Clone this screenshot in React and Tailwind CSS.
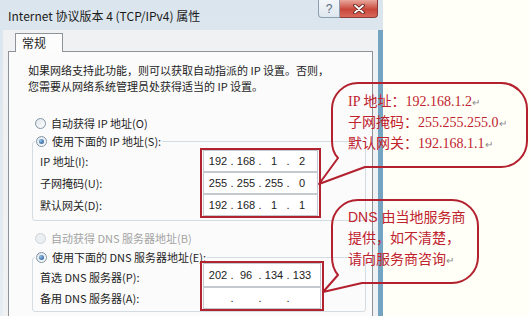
const CJK = "[font-family:'Noto_Sans_CJK_SC','Noto_Sans',sans-serif]";

function Radio({ checked, disabled, label, h = "h-[18px]" }) {
  return (
    <div className={`flex items-center gap-[5px] ${h}`}>
      <span
        className={
          disabled
            ? "w-[11px] h-[11px] rounded-full border border-[#cdd3d8] bg-[#eceff1] flex items-center justify-center shrink-0"
            : "w-[11px] h-[11px] rounded-full border border-[#7f94a7] bg-[linear-gradient(135deg,#dfe5ea,#ffffff)] flex items-center justify-center shrink-0"
        }
      >
        {checked && (
          <span className="w-[5px] h-[5px] rounded-full bg-[radial-gradient(circle_at_35%_35%,#8cc0ea,#1c4a80)]" />
        )}
      </span>
      <span className={disabled ? "text-[#a3a3a3]" : "text-[#1e1e1e]"}>{label}</span>
    </div>
  );
}

function IpField({ parts, h }) {
  return (
    <div
      className={`${h} border border-[#c3c9cf] bg-white flex items-center pl-[2px] text-[11px] text-[#222] [font-family:'Liberation_Sans',sans-serif]`}
    >
      {parts.map((p, i) => (
        <span key={i} className="flex">
          <span className="w-[24px] text-center">{p}</span>
          {i < 3 && <span className="w-[4px] text-center">.</span>}
        </span>
      ))}
    </div>
  );
}

export default function App() {
  return (
    <div className={`w-[529px] h-[316px] relative overflow-hidden bg-[#fffff7] flex ${CJK}`}>
      <div className="w-[383px] h-full flex flex-col bg-[linear-gradient(180deg,#dbe5ed,#e6edf3)]">
        {/* title bar */}
        <div className="h-[30px] flex items-start shrink-0">
          <span className="mt-[7px] ml-[8px] text-[12px] leading-[17px] text-[#1a1a1a] whitespace-nowrap">
            Internet 协议版本 4 (TCP/IPv4) 属性
          </span>
          <div className="ml-auto mr-[5px] flex">
            <div className="w-[22px] h-[18px] border border-t-0 border-[#8c9fb2] rounded-bl-[4px] bg-[linear-gradient(180deg,#f3f6f9,#dfe7ee)] flex items-center justify-center text-[12px] text-[#556a80] [font-family:'Liberation_Sans',sans-serif]">
              ?
            </div>
            <div className="w-[38px] h-[18px] border border-t-0 border-l-0 border-[#8b3b35] rounded-br-[4px] bg-[linear-gradient(180deg,#e9a79d,#c9473b_55%,#d8685a)] flex items-center justify-center">
              <svg width="12" height="10" viewBox="0 0 12 10">
                <path d="M2 1.5 L10 8.5 M10 1.5 L2 8.5" stroke="#5c1d18" strokeWidth="3.6" strokeLinecap="round" />
                <path d="M2 1.5 L10 8.5 M10 1.5 L2 8.5" stroke="#ffffff" strokeWidth="1.8" strokeLinecap="round" />
              </svg>
            </div>
          </div>
        </div>

        {/* body */}
        <div className="flex-1 min-h-0 flex flex-col ml-[3px] border-r-[5px] border-[#75a4c2] bg-[#eff1f3] pt-[3px] px-[5px]">
          <div className="relative z-10 -mb-[1px] ml-[7px] w-[48px] h-[19px] border border-b-0 border-[#8e9299] bg-[#fcfcfc] text-[12px] leading-[18px] text-[#1e1e1e] pl-[6px]">
            常规
          </div>
          <div className="flex-1 border border-[#8e9299] border-b-0 bg-[#fbfbfb] flex flex-col text-[11px] text-[#1e1e1e]">
            <p className="mt-[10px] ml-[19px] leading-[16px] whitespace-nowrap">
              如果网络支持此功能，则可以获取自动指派的 IP 设置。否则，
              <br />
              您需要从网络系统管理员处获得适当的 IP 设置。
            </p>

            <div className="mt-[20px] ml-[26px]">
              <Radio label="自动获得 IP 地址(O)" />
            </div>

            <fieldset className="mt-[2px] ml-[23px] mr-[6px] border border-[#d3dce2] rounded-[3px]">
              <legend className="ml-[2px] px-[1px] h-[14px]">
                <Radio checked label="使用下面的 IP 地址(S):" h="h-[14px]" />
              </legend>
              <div className="flex pb-[2px]">
                <div className="w-[167px] pl-[7px] pt-[2px] flex flex-col">
                  <div className="h-[22px] flex items-center">IP 地址(I):</div>
                  <div className="h-[22px] flex items-center">子网掩码(U):</div>
                  <div className="h-[22px] flex items-center">默认网关(D):</div>
                </div>
                <div className="w-[121px] border-2 border-[#b0232f] px-[1px] flex flex-col">
                  <IpField h="h-[22px]" parts={["192", "168", "1", "2"]} />
                  <IpField h="h-[22px]" parts={["255", "255", "255", "0"]} />
                  <IpField h="h-[22px]" parts={["192", "168", "1", "1"]} />
                </div>
              </div>
            </fieldset>

            <div className="mt-[8px] ml-[26px]">
              <Radio disabled label="自动获得 DNS 服务器地址(B)" />
            </div>

            <fieldset className="mt-[3px] ml-[23px] mr-[6px] border border-[#d3dce2] rounded-[3px]">
              <legend className="ml-[2px] px-[1px] h-[14px]">
                <Radio checked label="使用下面的 DNS 服务器地址(E):" h="h-[14px]" />
              </legend>
              <div className="flex -mt-[3px]">
                <div className="w-[167px] pl-[7px] pt-[2px] flex flex-col">
                  <div className="h-[24px] flex items-center pt-[4px]">首选 DNS 服务器(P):</div>
                  <div className="h-[22px] flex items-center">备用 DNS 服务器(A):</div>
                </div>
                <div className="w-[124px] border-2 border-[#b0232f] px-[1px] flex flex-col">
                  <IpField h="h-[24px]" parts={["202", "96", "134", "133"]} />
                  <IpField h="h-[22px]" parts={["", "", "", ""]} />
                </div>
              </div>
            </fieldset>
          </div>
        </div>
      </div>

      {/* callout bubbles (annotations drawn over the page) */}
      <svg className="absolute inset-0 pointer-events-none" width="529" height="316" viewBox="0 0 529 316">
        <path
          d="M358 83 H501 A26 26 0 0 1 527 109 V141 A26 26 0 0 1 501 167 H365 L319 184 L338 158 Q332 152 332 141 V109 A26 26 0 0 1 358 83 Z"
          fill="none"
          stroke="#b3202e"
          strokeWidth="2"
          strokeLinejoin="round"
        />
        <path
          d="M358 200 H452 A26 26 0 0 1 478 226 V257 A26 26 0 0 1 452 283 H362 L323 292 L338 275 Q332 268 332 257 V226 A26 26 0 0 1 358 200 Z"
          fill="none"
          stroke="#b3202e"
          strokeWidth="2"
          strokeLinejoin="round"
        />
      </svg>

      <div className="absolute left-[348px] top-[92px] flex flex-col text-[14px] leading-[20px] text-[#c0222e] whitespace-nowrap [font-family:'Liberation_Serif','Noto_Sans_CJK_SC',serif]">
        <span>
          IP 地址：192.168.1.2<span className="text-[10px] text-[#8a8a8a]">↵</span>
        </span>
        <span>
          子网掩码：255.255.255.0<span className="text-[10px] text-[#8a8a8a]">↵</span>
        </span>
        <span>
          默认网关：192.168.1.1<span className="text-[10px] text-[#8a8a8a]">↵</span>
        </span>
      </div>

      <div className="absolute left-[348px] top-[207px] flex flex-col text-[14px] leading-[21px] text-[#c0222e] whitespace-nowrap [font-family:'Liberation_Sans','Noto_Sans_CJK_SC',sans-serif]">
        <span>DNS 由当地服务商</span>
        <span>提供，如不清楚，</span>
        <span>
          请向服务商咨询<span className="text-[10px] text-[#8a8a8a]">↵</span>
        </span>
      </div>
    </div>
  );
}
